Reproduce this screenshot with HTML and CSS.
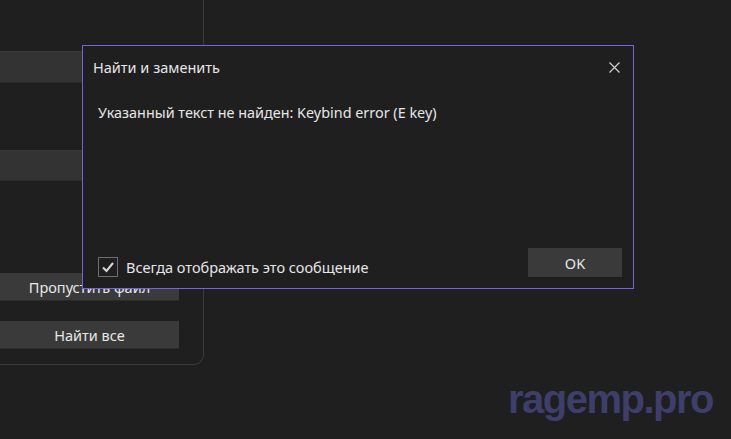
FILE: index.html
```html
<!DOCTYPE html>
<html lang="ru">
<head>
<meta charset="utf-8">
<title>Найти и заменить</title>
<link rel="stylesheet" href="styles.css">
</head>
<body>
<div class="page">
  <div class="panel">
    <div class="bar bar-1"></div>
    <div class="bar bar-2"></div>
    <div class="btn btn-skip">Пропустить файл</div>
    <div class="btn btn-all">Найти все</div>
  </div>

  <div class="watermark">ragemp.pro</div>

  <div class="dialog">
    <div class="dialog-head">
      <span class="dialog-title">Найти и заменить</span>
      <svg class="close" width="11" height="11" viewBox="0 0 11 11"><path d="M0.5 0.5 L10.5 10.5 M10.5 0.5 L0.5 10.5" stroke="#d0d0d0" stroke-width="1.2" fill="none"/></svg>
    </div>
    <div class="dialog-msg">Указанный текст не найден: Keybind error (E key)</div>
    <div class="dialog-foot">
      <label class="check">
        <span class="box"><svg width="14" height="12" viewBox="0 0 14 12"><path d="M2 6.5 L5.5 10 L12 2" stroke="#d8d8d8" stroke-width="2" fill="none"/></svg></span>
        <span class="check-text">Всегда отображать это сообщение</span>
      </label>
      <div class="ok">OK</div>
    </div>
  </div>
</div>
</body>
</html>
```
FILE: styles.css
```css
html, body {
  margin: 0;
  padding: 0;
  background: #1f1f1f;
  font-family: "Noto Sans", "Open Sans", sans-serif;
  color: #e6e6e6;
}
.page {
  position: relative;
  width: 731px;
  height: 439px;
  overflow: hidden;
}
.panel {
  width: 204px;
  height: 365px;
  border-right: 1px solid #3a3a3a;
  border-bottom: 1px solid #3a3a3a;
  border-bottom-right-radius: 10px;
  box-sizing: border-box;
  display: flex;
  flex-direction: column;
  padding-top: 51px;
}
.bar, .btn {
  width: 179px;
  background: #333333;
  border-top: 1px solid #3a3a3a;
  border-bottom: 1px solid #2a2a2a;
  box-sizing: border-box;
}
.bar-1 { height: 32px; }
.bar-2 { height: 31px; margin-top: 67px; }
.btn {
  height: 28px;
  display: flex;
  align-items: center;
  justify-content: center;
  font-size: 14.5px;
  color: #e8e8e8;
  background: #3a3a3a;
}
.btn-skip { margin-top: 92px; }
.btn-all { margin-top: 20px; }

.watermark {
  position: absolute;
  left: 508px;
  top: 377px;
  font-family: "Liberation Sans", Arial, sans-serif;
  font-weight: bold;
  font-size: 40px;
  letter-spacing: -1.5px;
  color: #3d3e6a;
}

.dialog {
  position: absolute;
  left: 82px;
  top: 45px;
  width: 552px;
  height: 244px;
  box-sizing: border-box;
  border: 1px solid #7264e6;
  background: #1f1f1f;
  display: flex;
  flex-direction: column;
}
.dialog-head {
  display: flex;
  align-items: center;
  justify-content: space-between;
  height: 42px;
  padding: 0 13px 0 10px;
}
.dialog-title {
  font-size: 14.5px;
  color: #e6e6e6;
}
.dialog-msg {
  margin-top: 15px;
  padding-left: 15px;
  font-size: 14.4px;
  color: #e6e6e6;
}
.dialog-foot {
  margin-top: auto;
  display: flex;
  align-items: flex-end;
  justify-content: space-between;
  padding: 0 11px 11px 15px;
}
.check {
  display: flex;
  align-items: center;
  gap: 8px;
}
.box {
  width: 20px;
  height: 20px;
  box-sizing: border-box;
  border: 1px solid #6e6e6e;
  display: flex;
  align-items: center;
  justify-content: center;
}
.check-text {
  font-size: 14.5px;
  color: #e6e6e6;
}
.ok {
  width: 94px;
  height: 29px;
  background: #3a3a3a;
  display: flex;
  align-items: center;
  justify-content: center;
  font-size: 14.5px;
  color: #e6e6e6;
}
```
